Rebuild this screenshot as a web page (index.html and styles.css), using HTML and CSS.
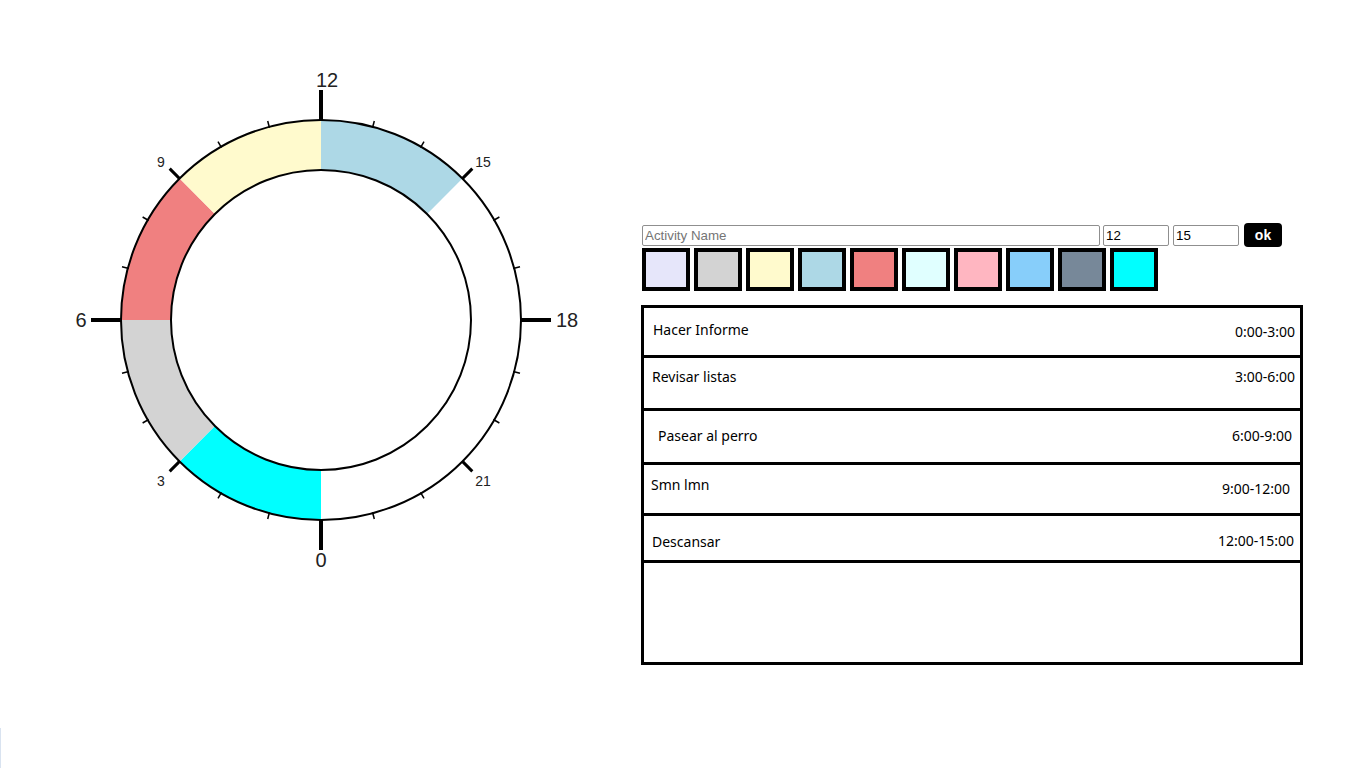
FILE: index.html
```html
<!DOCTYPE html>
<html lang="es">
<head>
<meta charset="utf-8">
<title>Reloj de actividades</title>
<link rel="stylesheet" href="styles.css">
</head>
<body>
<div class="page">
  <div class="clock-col">
    <svg class="clock" width="641" height="768" viewBox="0 0 641 768" xmlns="http://www.w3.org/2000/svg">
      <path d="M 321 520 A 200 200 0 0 1 179.58 461.42 L 214.93 426.07 A 150 150 0 0 0 321 470 Z" fill="#00ffff"/>
      <path d="M 179.58 461.42 A 200 200 0 0 1 121 320 L 171 320 A 150 150 0 0 0 214.93 426.07 Z" fill="#d3d3d3"/>
      <path d="M 121 320 A 200 200 0 0 1 179.58 178.58 L 214.93 213.93 A 150 150 0 0 0 171 320 Z" fill="#f08080"/>
      <path d="M 179.58 178.58 A 200 200 0 0 1 321 120 L 321 170 A 150 150 0 0 0 214.93 213.93 Z" fill="#fffacd"/>
      <path d="M 321 120 A 200 200 0 0 1 462.42 178.58 L 427.07 213.93 A 150 150 0 0 0 321 170 Z" fill="#add8e6"/>
      <circle cx="321" cy="320" r="200" fill="none" stroke="#000" stroke-width="2"/>
      <circle cx="321" cy="320" r="150" fill="none" stroke="#000" stroke-width="2"/>
      <g stroke="#000" stroke-width="4">
        <line x1="321" y1="520" x2="321" y2="550"/>
        <line x1="321" y1="520" x2="321" y2="550" transform="rotate(90 321 320)"/>
        <line x1="321" y1="520" x2="321" y2="550" transform="rotate(180 321 320)"/>
        <line x1="321" y1="520" x2="321" y2="550" transform="rotate(270 321 320)"/>
      </g>
      <g stroke="#000" stroke-width="3">
        <line x1="321" y1="520" x2="321" y2="534" transform="rotate(45 321 320)"/>
        <line x1="321" y1="520" x2="321" y2="534" transform="rotate(135 321 320)"/>
        <line x1="321" y1="520" x2="321" y2="534" transform="rotate(225 321 320)"/>
        <line x1="321" y1="520" x2="321" y2="534" transform="rotate(315 321 320)"/>
      </g>
      <g stroke="#000" stroke-width="1.5">
        <line x1="321" y1="519" x2="321" y2="526" transform="rotate(15 321 320)"/>
        <line x1="321" y1="519" x2="321" y2="526" transform="rotate(30 321 320)"/>
        <line x1="321" y1="519" x2="321" y2="526" transform="rotate(60 321 320)"/>
        <line x1="321" y1="519" x2="321" y2="526" transform="rotate(75 321 320)"/>
        <line x1="321" y1="519" x2="321" y2="526" transform="rotate(105 321 320)"/>
        <line x1="321" y1="519" x2="321" y2="526" transform="rotate(120 321 320)"/>
        <line x1="321" y1="519" x2="321" y2="526" transform="rotate(150 321 320)"/>
        <line x1="321" y1="519" x2="321" y2="526" transform="rotate(165 321 320)"/>
        <line x1="321" y1="519" x2="321" y2="526" transform="rotate(195 321 320)"/>
        <line x1="321" y1="519" x2="321" y2="526" transform="rotate(210 321 320)"/>
        <line x1="321" y1="519" x2="321" y2="526" transform="rotate(240 321 320)"/>
        <line x1="321" y1="519" x2="321" y2="526" transform="rotate(255 321 320)"/>
        <line x1="321" y1="519" x2="321" y2="526" transform="rotate(285 321 320)"/>
        <line x1="321" y1="519" x2="321" y2="526" transform="rotate(300 321 320)"/>
        <line x1="321" y1="519" x2="321" y2="526" transform="rotate(330 321 320)"/>
        <line x1="321" y1="519" x2="321" y2="526" transform="rotate(345 321 320)"/>
      </g>
      <g class="lbl-big" text-anchor="middle" dominant-baseline="central">
        <text x="327" y="80">12</text>
        <text x="321" y="560">0</text>
        <text x="81" y="320">6</text>
        <text x="567" y="320">18</text>
      </g>
      <g class="lbl-small" text-anchor="middle" dominant-baseline="central">
        <text x="483" y="162">15</text>
        <text x="483" y="481">21</text>
        <text x="161" y="162">9</text>
        <text x="161" y="481">3</text>
      </g>
    </svg>
  </div>
  <div class="panel">
    <div class="form-row">
      <input class="in-name" type="text" placeholder="Activity Name">
      <input class="in-hour" type="text" value="12">
      <input class="in-hour" type="text" value="15">
      <button class="ok-btn">ok</button>
    </div>
    <div class="swatches">
      <span class="swatch sw-lavender"></span>
      <span class="swatch sw-lightgray"></span>
      <span class="swatch sw-lemon"></span>
      <span class="swatch sw-lightblue"></span>
      <span class="swatch sw-coral"></span>
      <span class="swatch sw-cyanlight"></span>
      <span class="swatch sw-pink"></span>
      <span class="swatch sw-sky"></span>
      <span class="swatch sw-slate"></span>
      <span class="swatch sw-cyan"></span>
    </div>
    <div class="list">
      <div class="row r1"><span class="name">Hacer Informe</span><span class="time">0:00-3:00</span></div>
      <div class="row r2"><span class="name">Revisar listas</span><span class="time">3:00-6:00</span></div>
      <div class="row r3"><span class="name">Pasear al perro</span><span class="time">6:00-9:00</span></div>
      <div class="row r4"><span class="name">Smn lmn</span><span class="time">9:00-12:00</span></div>
      <div class="row r5"><span class="name">Descansar</span><span class="time">12:00-15:00</span></div>
    </div>
  </div>
</div>
<div class="edge-mark"></div>
</body>
</html>
```
FILE: styles.css
```css
html, body {
  margin: 0;
  padding: 0;
  background: #fff;
}

.page {
  display: flex;
  align-items: flex-start;
  width: 1366px;
  height: 768px;
  overflow: hidden;
}

.clock-col {
  width: 641px;
  flex: none;
}

.clock {
  display: block;
}

.lbl-big {
  font-family: "Liberation Sans", Arial, sans-serif;
  font-size: 20px;
  fill: #222;
}

.lbl-small {
  font-family: "Liberation Sans", Arial, sans-serif;
  font-size: 14px;
  fill: #222;
}

.panel {
  width: 662px;
  flex: none;
  padding-top: 223px;
}

.form-row {
  display: flex;
  align-items: center;
  height: 24px;
  padding-left: 1px;
}

.form-row input {
  box-sizing: border-box;
  height: 21px;
  margin: 0;
  padding: 1px 2px;
  font-family: "Liberation Sans", Arial, sans-serif;
  font-size: 13.33px;
  color: #000;
  border: 1px solid #8f8f8f;
  border-radius: 2px;
  background: #fff;
}

.form-row input::placeholder {
  color: #757575;
}

.in-name {
  width: 458px;
  margin-right: 3px !important;
}

.in-hour {
  width: 66px;
  margin-right: 4px !important;
}

.ok-btn {
  box-sizing: border-box;
  width: 38px;
  height: 24px;
  margin: 0 0 0 1px;
  padding: 0;
  border: none;
  border-radius: 4px;
  background: #000;
  color: #fff;
  font-family: "Liberation Sans", Arial, sans-serif;
  font-weight: bold;
  font-size: 14px;
}

.swatches {
  display: flex;
  gap: 4px;
  margin-top: 1px;
  padding-left: 1px;
}

.swatch {
  box-sizing: border-box;
  width: 48px;
  height: 43px;
  border: 4px solid #000;
}

.sw-lavender { background: #e6e6fa; }
.sw-lightgray { background: #d3d3d3; }
.sw-lemon { background: #fffacd; }
.sw-lightblue { background: #add8e6; }
.sw-coral { background: #f08080; }
.sw-cyanlight { background: #e0ffff; }
.sw-pink { background: #ffb6c1; }
.sw-sky { background: #87cefa; }
.sw-slate { background: #778899; }
.sw-cyan { background: #00ffff; }

.list {
  box-sizing: border-box;
  width: 662px;
  height: 360px;
  margin-top: 14px;
  border: 3px solid #000;
  font-family: "Noto Sans", "Open Sans", sans-serif;
  font-size: 14px;
  line-height: 20px;
  color: #000;
}

.row {
  display: flex;
  justify-content: space-between;
  align-items: flex-start;
  box-sizing: border-box;
  border-bottom: 3px solid #000;
}

.r1 { height: 50px; }
.r2 { height: 53px; }
.r3 { height: 54px; }
.r4 { height: 51px; }
.r5 { height: 47px; }

.r1 .name { margin: 12px 0 0 9px; }
.r1 .time { margin: 14px 5px 0 0; }
.r2 .name { margin: 9px 0 0 8px; }
.r2 .time { margin: 9px 5px 0 0; }
.r3 .name { margin: 15px 0 0 14px; }
.r3 .time { margin: 15px 8px 0 0; }
.r4 .name { margin: 10px 0 0 7px; }
.r4 .time { margin: 14px 10px 0 0; }
.r5 .name { margin: 16px 0 0 8px; }
.r5 .time { margin: 15px 6px 0 0; }

.edge-mark {
  position: fixed;
  left: 0;
  bottom: 0;
  width: 1px;
  height: 40px;
  background: #d9e3f0;
}
```
